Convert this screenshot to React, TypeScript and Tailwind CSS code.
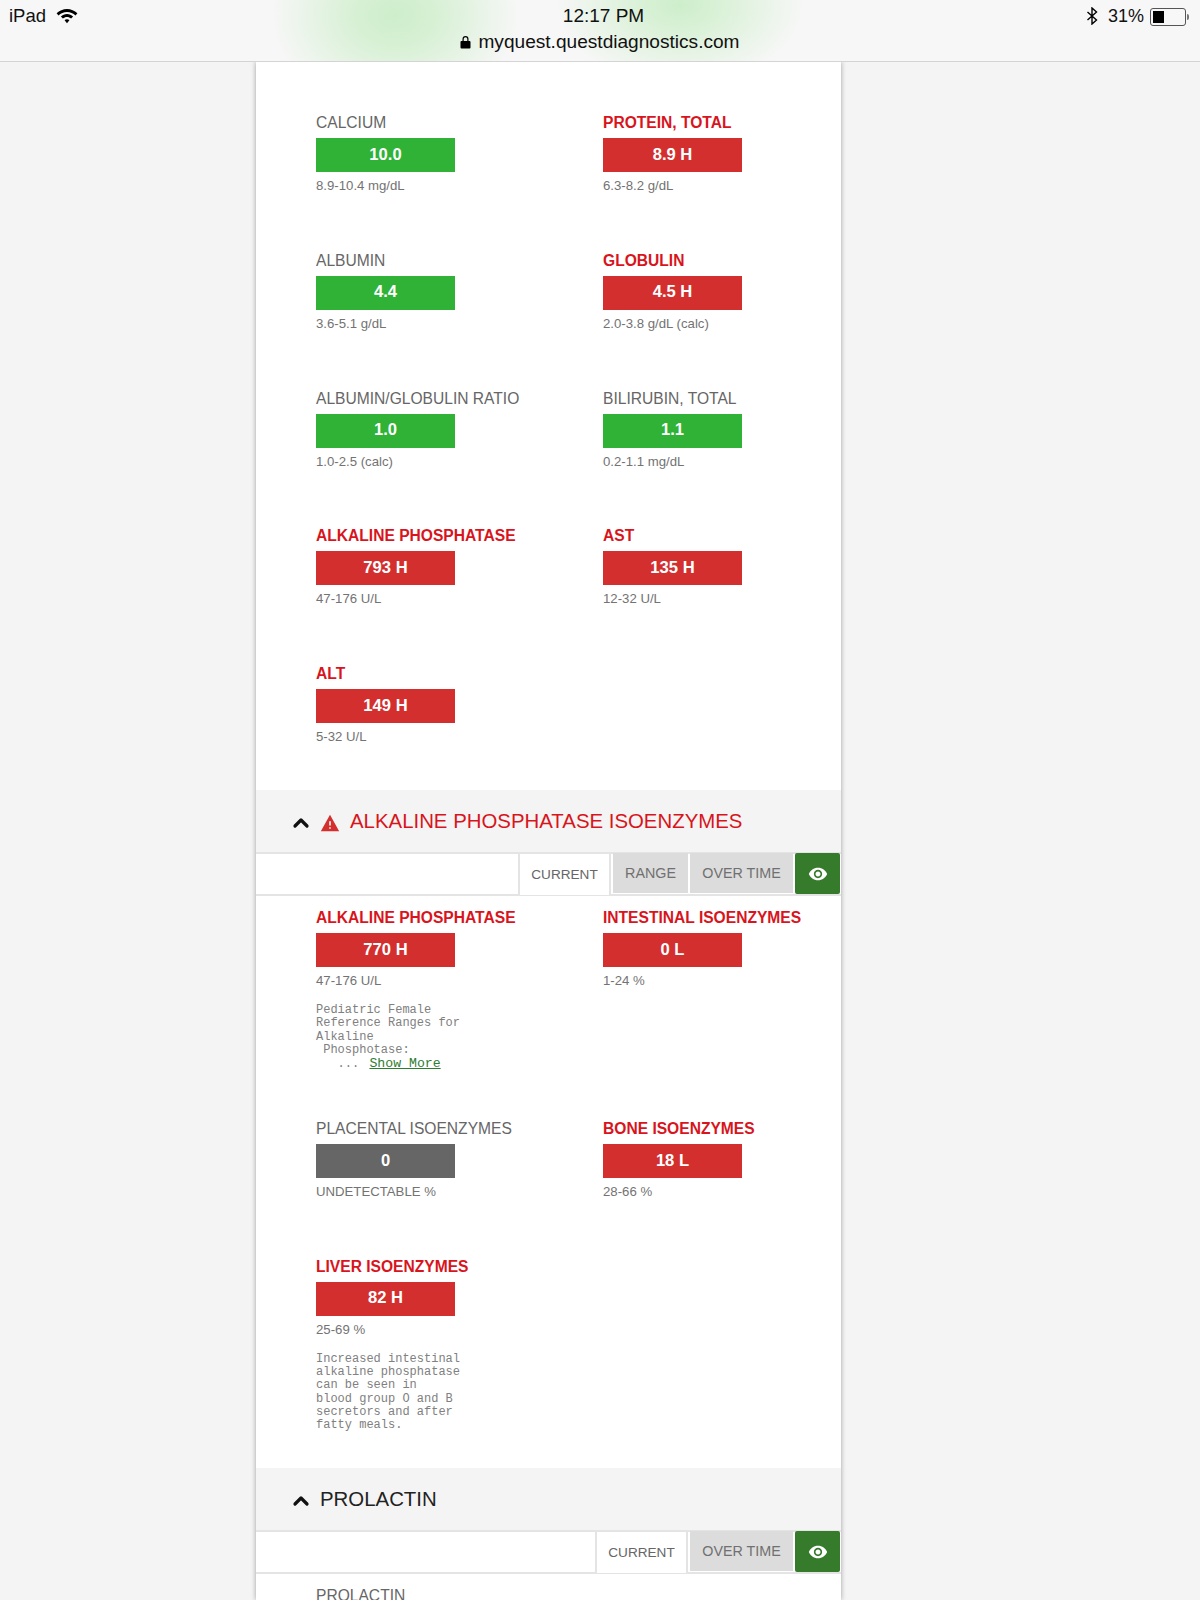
import { ChevronUp } from "lucide-react"

type Test = { name: string; value: string; range: string; status: "ok" | "bad" | "none"; note?: string[]; more?: boolean }

const panel1: Test[] = [
  { name: "CALCIUM", value: "10.0", range: "8.9-10.4 mg/dL", status: "ok" },
  { name: "PROTEIN, TOTAL", value: "8.9 H", range: "6.3-8.2 g/dL", status: "bad" },
  { name: "ALBUMIN", value: "4.4", range: "3.6-5.1 g/dL", status: "ok" },
  { name: "GLOBULIN", value: "4.5 H", range: "2.0-3.8 g/dL (calc)", status: "bad" },
  { name: "ALBUMIN/GLOBULIN RATIO", value: "1.0", range: "1.0-2.5 (calc)", status: "ok" },
  { name: "BILIRUBIN, TOTAL", value: "1.1", range: "0.2-1.1 mg/dL", status: "ok" },
  { name: "ALKALINE PHOSPHATASE", value: "793 H", range: "47-176 U/L", status: "bad" },
  { name: "AST", value: "135 H", range: "12-32 U/L", status: "bad" },
  { name: "ALT", value: "149 H", range: "5-32 U/L", status: "bad" },
]

const panel2: Test[] = [
  {
    name: "ALKALINE PHOSPHATASE",
    value: "770 H",
    range: "47-176 U/L",
    status: "bad",
    note: ["Pediatric Female", "Reference Ranges for", "Alkaline", " Phosphotase:"],
    more: true,
  },
  { name: "INTESTINAL ISOENZYMES", value: "0 L", range: "1-24 %", status: "bad" },
  { name: "PLACENTAL ISOENZYMES", value: "0", range: "UNDETECTABLE %", status: "none" },
  { name: "BONE ISOENZYMES", value: "18 L", range: "28-66 %", status: "bad" },
  {
    name: "LIVER ISOENZYMES",
    value: "82 H",
    range: "25-69 %",
    status: "bad",
    note: ["Increased intestinal", "alkaline phosphatase", "can be seen in", "blood group O and B", "secretors and after", "fatty meals."],
  },
]

function TestItem({ t, className }: { t: Test; className: string }) {
  const boxColor = t.status === "ok" ? "bg-[#2fb236]" : t.status === "bad" ? "bg-[#d32f2f]" : "bg-[#666666]"
  return (
    <div className={className}>
      <div className={`text-[15.6px] leading-[20px] whitespace-nowrap ${t.status === "bad" ? "font-bold text-[#d8141c]" : "text-[#666666]"}`}>{t.name}</div>
      <div className={`mt-[5px] h-[34px] w-[139px] flex items-center justify-center text-white font-bold text-[16.6px] ${boxColor}`}>{t.value}</div>
      <div className="mt-[6px] text-[13.2px] leading-[16px] text-[#737373]">{t.range}</div>
      {t.note && (
        <div className="mt-[15px] font-['Liberation_Mono',monospace] text-[12px] leading-[13.3px] text-[#808080] whitespace-pre">
          {t.note.map((l) => (
            <div key={l}>{l}</div>
          ))}
          {t.more && (
            <div>
              {"   ... "}
              <span className="ml-[3px] text-[13.2px] text-[#2e7d32] underline">Show More</span>
            </div>
          )}
        </div>
      )}
    </div>
  )
}

function Eye() {
  return (
    <svg width="20" height="20" viewBox="0 0 24 24" fill="white">
      <path d="M12 4.500C7 4.500 2.730 7.610 1 12c1.730 4.390 6 7.500 11 7.500s9.270-3.110 11-7.500c-1.730-4.390-6-7.500-11-7.500zM12 17c-2.760 0-5-2.240-5-5s2.240-5 5-5 5 2.240 5 5-2.240 5-5 5zm0-8c-1.660 0-3 1.340-3 3s1.340 3 3 3 3-1.340 3-3-1.340-3-3-3z" />
    </svg>
  )
}

function SectionHeader({ title, alert }: { title: string; alert?: boolean }) {
  return (
    <div className="h-[62px] bg-[#f4f4f4] flex items-center pl-[33px]">
      <ChevronUp size={24} strokeWidth={3.200} className="text-[#111111] mt-[3px]" />
      {alert && (
        <svg width="20" height="20" viewBox="0 0 24 24" className="ml-[7px] mt-[3px]" fill="#d32f2f">
          <path d="M1 22h22L12 2 1 22zm12-3h-2v-2h2v2zm0-4h-2v-5h2v5z" />
        </svg>
      )}
      <div className={`text-[20.4px] ${alert ? "ml-[10px] text-[#d8141c]" : "ml-[7px] text-[#222222]"}`}>{title}</div>
    </div>
  )
}

function Tabs({ range }: { range?: boolean }) {
  return (
    <div className="h-[44px] flex justify-end border-y-2 border-[#e4e4e4] pr-[1px]">
      <div className="w-[93px] -mb-[1px] bg-white border-x-2 border-[#e4e4e4] flex items-center justify-center pt-[1px] text-[13.6px] text-[#666666]">CURRENT</div>
      {range && <div className="ml-[2px] w-[75px] -mt-[1px] mb-[1px] bg-[#dcdcdc] flex items-center justify-center pt-[1px] text-[14.3px] text-[#707070]">RANGE</div>}
      <div className="ml-[2px] w-[103px] -mt-[1px] mb-[1px] bg-[#dcdcdc] flex items-center justify-center pt-[1px] text-[14.3px] text-[#707070]">OVER TIME</div>
      <div className="ml-[2px] w-[45px] -mt-[1px] bg-[#367a2b] rounded-[2px] flex items-center justify-center">
        <Eye />
      </div>
    </div>
  )
}

function StatusBar() {
  return (
    <div className="relative h-[62px] bg-[#f7f7f7] border-b border-[#d4d4d4] overflow-hidden font-['Liberation_Sans',sans-serif]">
      {/* the green glow behind the address */}
      <div className="absolute inset-0 bg-[radial-gradient(ellipse_125px_95px_at_395px_15px,#cdeecb_0%,#d6f0d3_30%,rgba(247,247,247,0)_100%),radial-gradient(ellipse_125px_80px_at_680px_5px,#cdeecb_0%,#d9f1d6_30%,rgba(247,247,247,0)_100%)]" />
      <div className="relative h-full flex justify-between">
        <div className="flex items-start pl-[9px] pt-[2px] text-[18.5px] text-[#111111]">
          <span>iPad</span>
          <svg width="22" height="16" viewBox="0 0 22 16" className="ml-[10px] mt-[6px]" fill="#000000">
            <path d="M11 1C7 1 3.400 2.600.600 5.300l1.900 2.100C4.700 5.200 7.700 3.900 11 3.900s6.300 1.300 8.500 3.500l1.900-2.100C18.600 2.600 15 1 11 1z" />
            <path d="M11 6c-2.300 0-4.500.9-6.100 2.500l2 2.100C8 9.500 9.400 8.900 11 8.900s3 .6 4.100 1.700l2-2.100C15.500 6.900 13.300 6 11 6z" />
            <path d="M11 11.200c-.9 0-1.800.4-2.400 1L11 15.300l2.400-3.100c-.6-.6-1.500-1-2.400-1z" />
          </svg>
        </div>
        <div className="absolute left-0 right-0 top-[4px] flex flex-col items-center text-[#111111]">
          <div className="text-[19px] leading-[24px] ml-[7px]">12:17 PM</div>
          <div className="flex items-center text-[19.1px] leading-[27px]">
            <svg width="11" height="14" viewBox="0 0 11 14" className="mr-[7px]" fill="#000000">
              <path d="M2.500 6V4a3 3 0 0 1 6 0v2H7.300V4a1.800 1.800 0 0 0-3.600 0v2z" />
              <rect x="0.500" y="6" width="10" height="7.500" rx="1" />
            </svg>
            myquest.questdiagnostics.com
          </div>
        </div>
        <div className="flex items-start pr-[11px] pt-[3px] text-[18px] text-[#111111]">
          <svg width="12" height="18" viewBox="0 0 12 18" className="mt-[4px] mr-[10px]" fill="none" stroke="#000000" strokeWidth="1.400">
            <path d="M1.500 5l9 8-4.500 4V1l4.500 4-9 8" />
          </svg>
          <span>31%</span>
          <div className="ml-[6px] mt-[5px] flex items-center">
            <div className="w-[36px] h-[18px] border border-[#555555] rounded-[3px] p-[2px]">
              <div className="h-full w-[11px] bg-black" />
            </div>
            <div className="w-[2px] h-[6px] bg-[#777777] ml-[1px] rounded-r-full" />
          </div>
        </div>
      </div>
    </div>
  )
}

export default function App() {
  return (
    <div className="h-[1600px] overflow-hidden bg-[#f4f4f4] font-['Liberation_Sans',sans-serif]">
      <StatusBar />
      <div className="w-[585px] ml-[256px] h-[1538px] bg-white shadow-[0_0_5px_rgba(0,0,0,0.35)] overflow-hidden">
        <div className="pt-[51px] pl-[60px] h-[728px]">
          <div className="grid grid-cols-[287px_1fr] auto-rows-[137.75px]">
            {panel1.map((t) => (
              <TestItem key={t.name} t={t} className="" />
            ))}
          </div>
        </div>
        <SectionHeader title="ALKALINE PHOSPHATASE ISOENZYMES" alert />
        <Tabs range />
        <div className="pt-[12px] pl-[60px] h-[572px]">
          <div className="grid grid-cols-[287px_1fr]">
            <TestItem t={panel2[0]} className="h-[211px]" />
            <TestItem t={panel2[1]} className="" />
            <TestItem t={panel2[2]} className="h-[137.75px]" />
            <TestItem t={panel2[3]} className="" />
            <TestItem t={panel2[4]} className="" />
          </div>
        </div>
        <SectionHeader title="PROLACTIN" />
        <Tabs />
        <div className="pt-[12px] pl-[60px] text-[15.6px] leading-[20px] text-[#666666]">PROLACTIN</div>
      </div>
    </div>
  )
}
